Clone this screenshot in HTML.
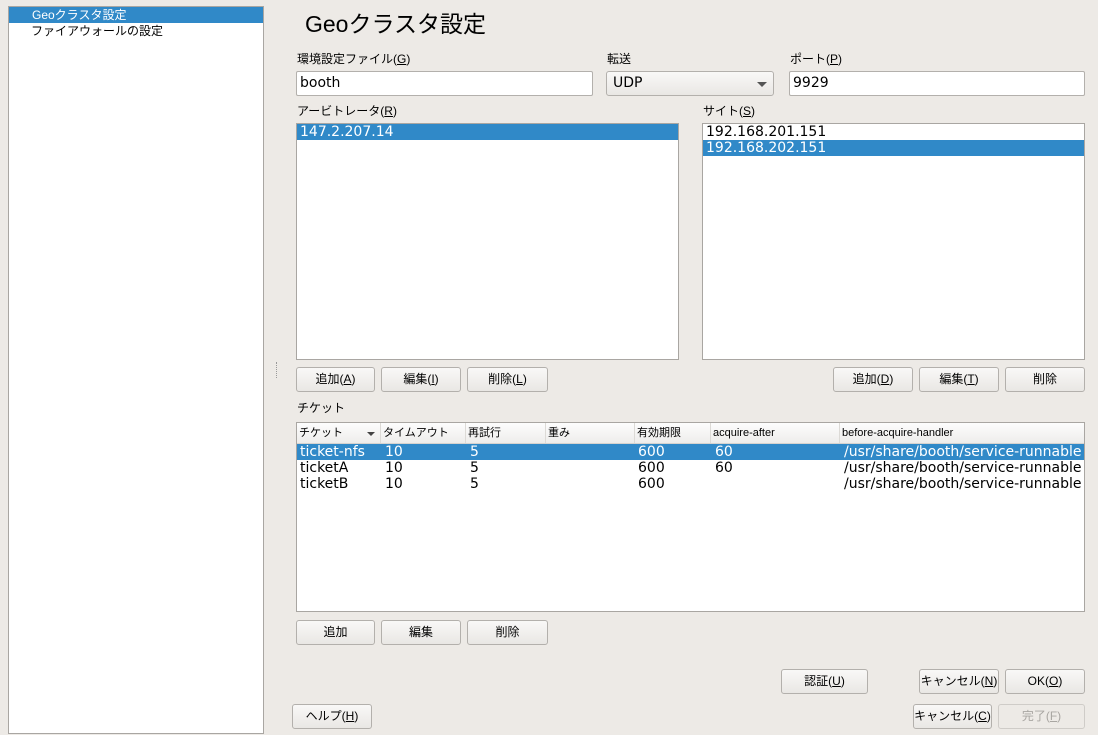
<!DOCTYPE html>
<html><head><meta charset="utf-8"><style>
*{box-sizing:border-box;margin:0;padding:0}
body{width:1098px;height:735px;background:#edeae6;position:relative;overflow:hidden;font-family:"Liberation Sans","Noto Sans CJK JP",sans-serif;font-size:12px;color:#000}
.a{position:absolute}
.box{position:absolute;background:#fff;border:1px solid #a9a6a2}
.sel{position:absolute;left:0;right:0;height:16px;background:#3089c8;color:#fff}
.row{position:absolute;left:0;right:0;height:16px;font-size:14px;line-height:16px;padding-left:3px;font-family:"DejaVu Sans","Noto Sans CJK JP",sans-serif}
.lbl{position:absolute;font-size:12px;line-height:14px}
.btn{position:absolute;height:25px;border:1px solid #b3b0ac;border-radius:3px;background:linear-gradient(#f9f8f7,#e9e7e4);text-align:center;line-height:23px;font-size:12px}
.inp{position:absolute;height:25px;background:#fff;border:1px solid #b3b0ac;border-radius:2px;font-size:14px;line-height:23px;padding-left:3px;font-family:"DejaVu Sans",sans-serif}
u{text-decoration:underline}
.c{position:absolute;top:0;height:16px;line-height:16px;font-size:14px;font-family:"DejaVu Sans","Noto Sans CJK JP",sans-serif}
.h{position:absolute;top:0;height:20px;line-height:20px;font-size:11px;padding-left:2px;border-right:1px solid #dcdad6}
</style></head><body>
<div class="box" style="left:8px;top:6px;width:256px;height:728px">
 <div class="sel" style="top:0;height:16px;line-height:16px;padding-left:23px;font-size:12px">Geoクラスタ設定</div>
 <div class="a" style="top:16px;left:22px;line-height:16px">ファイアウォールの設定</div>
</div>
<div class="a" style="left:305px;top:9px;font-size:23px;line-height:30px">Geoクラスタ設定</div>

<div class="lbl" style="left:297px;top:52px">環境設定ファイル(<u>G</u>)</div>
<div class="inp" style="left:296px;top:71px;width:297px">booth</div>
<div class="lbl" style="left:607px;top:52px">転送</div>
<div class="btn" style="left:606px;top:71px;width:168px;text-align:left;padding-left:6px;font-size:14px;font-family:'DejaVu Sans',sans-serif">UDP<span class="a" style="right:6px;top:10px;width:0;height:0;border-left:5px solid transparent;border-right:5px solid transparent;border-top:5px solid #555"></span></div>
<div class="lbl" style="left:790px;top:52px">ポート(<u>P</u>)</div>
<div class="inp" style="left:789px;top:71px;width:296px">9929</div>

<div class="lbl" style="left:297px;top:104px">アービトレータ(<u>R</u>)</div>
<div class="box" style="left:296px;top:123px;width:383px;height:237px">
 <div class="sel row" style="top:0">147.2.207.14</div>
</div>
<div class="lbl" style="left:703px;top:104px">サイト(<u>S</u>)</div>
<div class="box" style="left:702px;top:123px;width:383px;height:237px">
 <div class="row" style="top:0">192.168.201.151</div>
 <div class="sel row" style="top:16px">192.168.202.151</div>
</div>
<div class="a" style="left:276px;top:362px;width:1px;height:16px;border-left:1px dotted #999"></div>

<div class="btn" style="left:296px;top:367px;width:79px">追加(<u>A</u>)</div>
<div class="btn" style="left:381px;top:367px;width:80px">編集(<u>I</u>)</div>
<div class="btn" style="left:467px;top:367px;width:81px">削除(<u>L</u>)</div>
<div class="btn" style="left:833px;top:367px;width:80px">追加(<u>D</u>)</div>
<div class="btn" style="left:919px;top:367px;width:80px">編集(<u>T</u>)</div>
<div class="btn" style="left:1005px;top:367px;width:80px">削除</div>

<div class="lbl" style="left:297px;top:401px">チケット</div>
<div class="box" style="left:296px;top:422px;width:789px;height:190px">
 <div class="a" style="left:0;top:0;right:0;height:21px;background:linear-gradient(#fdfdfd,#eeedeb);border-bottom:1px solid #d6d3cf">
  <div class="h" style="left:0;width:84px">チケット<span class="a" style="left:70px;top:9px;border-left:4px solid transparent;border-right:4px solid transparent;border-top:4px solid #444"></span></div>
  <div class="h" style="left:84px;width:85px">タイムアウト</div>
  <div class="h" style="left:169px;width:80px">再試行</div>
  <div class="h" style="left:249px;width:89px">重み</div>
  <div class="h" style="left:338px;width:76px">有効期限</div>
  <div class="h" style="left:414px;width:129px">acquire-after</div>
  <div class="h" style="left:543px;width:245px;border:none">before-acquire-handler</div>
 </div>
 <div class="a" style="left:0;right:0;top:21px;height:16px;background:#3089c8;color:#fff">
  <span class="c" style="left:3px">ticket-nfs</span><span class="c" style="left:88px">10</span><span class="c" style="left:173px">5</span><span class="c" style="left:341px">600</span><span class="c" style="left:418px">60</span><span class="c" style="left:547px">/usr/share/booth/service-runnable</span>
 </div>
 <div class="a" style="left:0;right:0;top:37px;height:16px">
  <span class="c" style="left:3px">ticketA</span><span class="c" style="left:88px">10</span><span class="c" style="left:173px">5</span><span class="c" style="left:341px">600</span><span class="c" style="left:418px">60</span><span class="c" style="left:547px">/usr/share/booth/service-runnable</span>
 </div>
 <div class="a" style="left:0;right:0;top:53px;height:16px">
  <span class="c" style="left:3px">ticketB</span><span class="c" style="left:88px">10</span><span class="c" style="left:173px">5</span><span class="c" style="left:341px">600</span><span class="c" style="left:547px">/usr/share/booth/service-runnable</span>
 </div>
</div>

<div class="btn" style="left:296px;top:620px;width:79px">追加</div>
<div class="btn" style="left:381px;top:620px;width:80px">編集</div>
<div class="btn" style="left:467px;top:620px;width:81px">削除</div>

<div class="btn" style="left:781px;top:669px;width:87px">認証(<u>U</u>)</div>
<div class="btn" style="left:919px;top:669px;width:80px">キャンセル(<u>N</u>)</div>
<div class="btn" style="left:1005px;top:669px;width:80px">OK(<u>O</u>)</div>
<div class="btn" style="left:292px;top:704px;width:80px">ヘルプ(<u>H</u>)</div>
<div class="btn" style="left:913px;top:704px;width:79px">キャンセル(<u>C</u>)</div>
<div class="btn" style="left:998px;top:704px;width:87px;color:#a9a6a2;background:#edeae6;border-color:#cfccc8">完了(<u>F</u>)</div>
</body></html>
